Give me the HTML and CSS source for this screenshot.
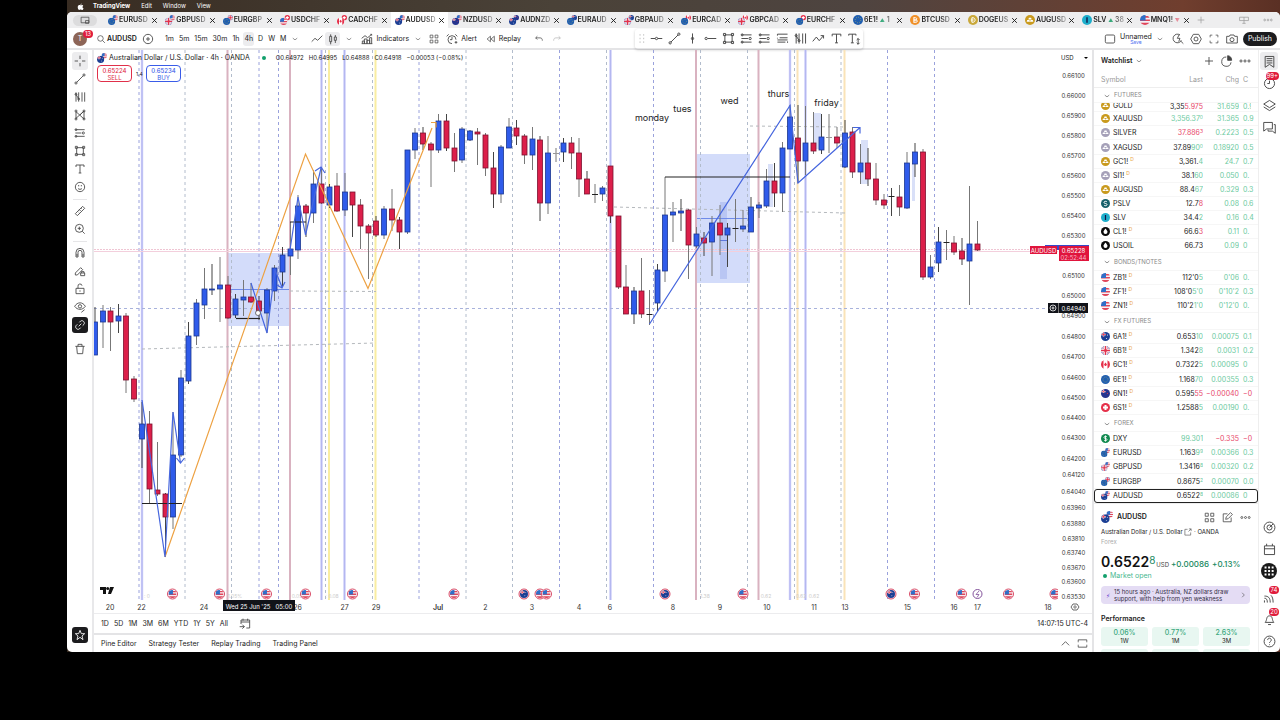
FILE: index.html
```html
<!DOCTYPE html>
<html lang="en">
<head>
<meta charset="utf-8">
<title>AUDUSD – TradingView</title>
<link rel="stylesheet" href="styles.css">
</head>
<body>
<svg class="sprite" aria-hidden="true">
  <defs>
    <clipPath id="disc"><circle cx="9" cy="9" r="9"/></clipPath>
    <symbol id="f-us" viewBox="0 0 18 18"><g clip-path="url(#disc)"><path fill="#f4f0f6" d="M0 0h18v18H0z"/><path fill="#e0465a" d="M0 2h18v3H0zM0 8h18v3H0zM0 14h18v4H0z"/><path fill="#2f6fc8" d="M0 0h10v10H0z"/></g></symbol>
    <symbol id="f-au" viewBox="0 0 18 18"><g clip-path="url(#disc)"><path fill="#1c3f94" d="M0 0h18v18H0z"/><path stroke="#fff" stroke-width="3" d="M5 0v9M0 5h10"/><path stroke="#e0304a" stroke-width="1.5" d="M5 0v9M0 5h10"/><circle cx="13" cy="6" r="1" fill="#fff"/><circle cx="11" cy="13" r="1" fill="#fff"/></g></symbol>
    <symbol id="f-nz" viewBox="0 0 18 18"><g clip-path="url(#disc)"><path fill="#25348f" d="M0 0h18v18H0z"/><path stroke="#fff" stroke-width="2.5" d="M5 0v8M0 5h9"/><path stroke="#e0304a" d="M5 0v8M0 5h9"/><circle cx="13" cy="9" r="1.2" fill="#e0304a"/></g></symbol>
    <symbol id="f-eu" viewBox="0 0 18 18"><circle cx="9" cy="9" r="9" fill="#1f5eb0"/><circle cx="9" cy="9" r="5" fill="none" stroke="#b8b46a" stroke-width="1.4" stroke-dasharray="1.4 2.5"/></symbol>
    <symbol id="f-gb" viewBox="0 0 18 18"><g clip-path="url(#disc)"><path fill="#5a6fb8" d="M0 0h18v18H0z"/><path stroke="#fff" stroke-width="3" d="M0 0l18 18M18 0L0 18"/><path stroke="#fff" stroke-width="6" d="M9 0v18M0 9h18"/><path stroke="#e0344e" stroke-width="3" d="M9 0v18M0 9h18"/><path stroke="#e0344e" d="M0 0l18 18M18 0L0 18"/></g></symbol>
    <symbol id="f-ch" viewBox="0 0 18 18"><circle cx="9" cy="9" r="9" fill="#e5304a"/><path fill="#fff" d="M7 4h4v3h3v4h-3v3H7v-3H4V7h3z"/></symbol>
    <symbol id="f-ca" viewBox="0 0 18 18"><g clip-path="url(#disc)"><path fill="#fff" d="M0 0h18v18H0z"/><path fill="#e5304a" d="M0 0h5v18H0zM13 0h5v18h-5zM9 5l3 4-2 3H8L6 9z"/></g></symbol>
    <symbol id="f-gold" viewBox="0 0 18 18"><circle cx="9" cy="9" r="9" fill="#c99a1e"/><path fill="#fff" d="M7 5h4l1 3H6zM4 9h4l1 3H3zM10 9h4l1 3H9z"/></symbol>
    <symbol id="f-silver" viewBox="0 0 18 18"><circle cx="9" cy="9" r="9" fill="#a5a0b8"/><path fill="#fff" d="M7 5h4l1 3H6zM4 9h4l1 3H3zM10 9h4l1 3H9z"/></symbol>
    <symbol id="f-pslv" viewBox="0 0 18 18"><circle cx="9" cy="9" r="9" fill="#17606b"/><path fill="none" stroke="#fff" stroke-width="2" d="M12 6c-1-2-6-2-6 1s6 1 6 4-5 3-6 1"/></symbol>
    <symbol id="f-slv" viewBox="0 0 18 18"><circle cx="9" cy="9" r="9" fill="#1eaecb"/><path stroke="#114" stroke-width="2.4" d="M9 4v10"/></symbol>
    <symbol id="f-oil" viewBox="0 0 18 18"><circle cx="9" cy="9" r="9" fill="#0b0b0b"/><path fill="#fff" d="M9 3c3 4 4 5 4 7a4 4 0 0 1-8 0c0-2 1-3 4-7z"/></symbol>
    <symbol id="f-dxy" viewBox="0 0 18 18"><circle cx="9" cy="9" r="9" fill="#128a50"/><path fill="none" stroke="#fff" stroke-width="1.8" d="M12 6c-1-2-6-2-6 1s6 1 6 4-5 3-6 1M9 3v12"/></symbol>
    <symbol id="f-btc" viewBox="0 0 18 18"><circle cx="9" cy="9" r="9" fill="#f09028"/><path fill="none" stroke="#fff" stroke-width="1.8" d="M7 4v10M7 5h3c3 0 3 4 0 4H7h4c3 0 3 4 0 4H7"/></symbol>
    <symbol id="f-doge" viewBox="0 0 18 18"><circle cx="9" cy="9" r="9" fill="#c9a83a"/><path fill="none" stroke="#fff" stroke-width="1.8" d="M7 5v8h2c5 0 5-8 0-8zM5 9h5"/></symbol>

    <symbol id="i-search" viewBox="0 0 18 18"><circle cx="8" cy="8" r="5"/><path d="M12 12l4 4"/></symbol>
    <symbol id="i-plusc" viewBox="0 0 18 18"><circle cx="9" cy="9" r="7"/><path d="M9 6v6M6 9h6"/></symbol>
    <symbol id="i-plus" viewBox="0 0 18 18"><path d="M9 3v12M3 9h12"/></symbol>
    <symbol id="i-close" viewBox="0 0 18 18"><path d="M3 3l12 12M15 3L3 15"/></symbol>
    <symbol id="i-chev" viewBox="0 0 18 18"><path d="M4 7l5 4 5-4"/></symbol>
    <symbol id="i-chevup" viewBox="0 0 18 18"><path d="M3 12l6-6 6 6"/></symbol>
    <symbol id="i-chevr" viewBox="0 0 18 18"><path d="M7 4l5 5-5 5"/></symbol>
    <symbol id="i-line" viewBox="0 0 18 18"><path d="M1 13l5-5 4 3 7-7"/></symbol>
    <symbol id="i-candle" viewBox="0 0 18 18"><path d="M4 5h3v8H4zM5.500 2v3M5.500 13v4M11 6h3v5h-3zM12.500 3v3M12.500 11v4"/></symbol>
    <symbol id="i-ind" viewBox="0 0 18 18"><path d="M1 8l5-4 4 3 6-5M14 2h2v2M2 16v-4h3v4M5 16V9h4v7M9 16v-5h4v5M13 16V7h3v9M1 16h16"/></symbol>
    <symbol id="i-grid" viewBox="0 0 18 18"><path d="M2 2h5v5H2zM11 2h5v5h-5zM2 11h5v5H2zM11 11h5v5h-5z"/></symbol>
    <symbol id="i-alert" viewBox="0 0 18 18"><path d="M9 16a6 6 0 1 1 6-6M9 6v4H6M1 5l3-3M14 2l3 3M13 14h4M15 12v4"/></symbol>
    <symbol id="i-replay" viewBox="0 0 18 18"><path d="M8 4L2 9l6 5zM15 4L9 9l6 5z"/></symbol>
    <symbol id="i-undo" viewBox="0 0 18 18"><path d="M6 4L3 7l3 3M3 7h8c3 0 4 2 4 5"/></symbol>
    <symbol id="i-redo" viewBox="0 0 18 18"><path d="M12 4l3 3-3 3M15 7H7c-3 0-4 2-4 5"/></symbol>
    <symbol id="i-drag" viewBox="0 0 18 18"><path stroke-dasharray="2 3" d="M7 3v13M12 3v13"/></symbol>
    <symbol id="i-hline" viewBox="0 0 18 18"><path d="M1 9h6M11 9h6"/><circle cx="9" cy="9" r="1.600"/></symbol>
    <symbol id="i-trend" viewBox="0 0 18 18"><path d="M4 14L14 4"/><circle cx="3" cy="15" r="1.6"/><circle cx="15" cy="3" r="1.6"/></symbol>
    <symbol id="i-vline" viewBox="0 0 18 18"><path d="M9 2v14"/><circle cx="9" cy="9" r="1.6"/></symbol>
    <symbol id="i-hray" viewBox="0 0 18 18"><circle cx="3" cy="9" r="1.6"/><path d="M5 9h12"/></symbol>
    <symbol id="i-rect" viewBox="0 0 18 18"><path d="M4 4h10v10H4z"/><path d="M2 2h3v3H2zM13 2h3v3h-3zM2 13h3v3H2zM13 13h3v3h-3z"/></symbol>
    <symbol id="i-fib" viewBox="0 0 18 18"><path d="M2 3h14M5 8h11M2 8v1M2 14h11M16 13v2M2 3v2M2 11h14"/></symbol>
    <symbol id="i-long" viewBox="0 0 18 18"><path d="M2 4h14M2 9h9M2 14h14"/><circle cx="3" cy="4" r="1.4"/><circle cx="14" cy="9" r="1.6"/><circle cx="3" cy="14" r="1.4"/></symbol>
    <symbol id="i-pitch" viewBox="0 0 18 18"><path d="M3 2v14M7 2v14M12 2v14M16 2v14M3 5l4 7"/><circle cx="3" cy="5" r="1.4"/><circle cx="7" cy="12" r="1.4"/></symbol>
    <symbol id="i-pattern" viewBox="0 0 18 18"><path d="M3 15V4l12 11V3L3 14M9 9l6-6"/><circle cx="3" cy="15" r="1.5"/><circle cx="3" cy="3" r="1.5"/><circle cx="15" cy="15" r="1.5"/><circle cx="15" cy="3" r="1.5"/></symbol>
    <symbol id="i-path" viewBox="0 0 18 18"><path d="M1 13l5-6 4 5 6-7M12 5h4v4"/></symbol>
    <symbol id="i-text" viewBox="0 0 18 18"><path d="M3 6V3h12v3M9 3v12M7 15h4"/></symbol>
    <symbol id="i-anchor" viewBox="0 0 18 18"><path d="M1 5V3h10v2M6 3v12M4 15h4M14 9v8M12 15l2 2 2-2M12 11l2-2 2 2"/></symbol>
    <symbol id="i-cross" viewBox="0 0 18 18"><path d="M9 1v5M9 12v5M1 9h5M12 9h5"/></symbol>
    <symbol id="i-smile" viewBox="0 0 18 18"><circle cx="9" cy="9" r="7"/><path d="M7 6v2M11 6v2M6 11c1 2 5 2 6 0"/></symbol>
    <symbol id="i-ruler" viewBox="0 0 18 18"><path d="M2 13L13 2l3 3L5 16zM6 10l1 1M8 7l2 2M11 5l1 1"/></symbol>
    <symbol id="i-zoomin" viewBox="0 0 18 18"><circle cx="8" cy="8" r="6"/><path d="M12.500 12.500L16 16M8 5.500v5M5.500 8h5"/></symbol>
    <symbol id="i-magnet" viewBox="0 0 18 18"><path d="M3 15V8a6 6 0 0 1 12 0v7h-3V8a3 3 0 0 0-6 0v7zM3 12h3M12 12h3"/></symbol>
    <symbol id="i-draw" viewBox="0 0 18 18"><path d="M2 12l8-8 3 3-8 8H2zM10 12h6v4h-6zM11 12v-2h4v2"/></symbol>
    <symbol id="i-lock" viewBox="0 0 18 18"><path d="M3 8h12v8H3zM6 8V5a3 3 0 0 1 6-1M9 11v2"/></symbol>
    <symbol id="i-eye" viewBox="0 0 18 18"><path d="M1 8c4-7 12-7 16 0-4 6-12 6-16 0zM11 17l5-4"/><circle cx="9" cy="8" r="2.500"/></symbol>
    <symbol id="i-link" viewBox="0 0 18 18"><path d="M7 11l4-4M8 5l2-2c3-2 7 2 5 5l-2 2M10 13l-2 2c-3 2-7-2-5-5l2-2"/></symbol>
    <symbol id="i-trash" viewBox="0 0 18 18"><path d="M2 5h14M6 5V2h6v3M4 5l1 11h8l1-11"/></symbol>
    <symbol id="i-star" viewBox="0 0 18 18"><path d="M9 2l2 5h5l-4 3.500L13.500 16 9 12.500 4.500 16 6 10.500 2 7h5z"/></symbol>
    <symbol id="i-square" viewBox="0 0 18 18"><rect x="2" y="3" width="14" height="12" rx="2"/></symbol>
    <symbol id="i-quick" viewBox="0 0 18 18"><path d="M12 3a6.500 6.500 0 1 0 2 8M11 2L8 8h4l-2 5M13 12l4 4"/></symbol>
    <symbol id="i-hex" viewBox="0 0 18 18"><path d="M5 2h8l4 7-4 7H5L1 9z"/><circle cx="9" cy="9" r="3"/></symbol>
    <symbol id="i-full" viewBox="0 0 18 18"><path d="M2 6V2h4M12 2h4v4M16 12v4h-4M6 16H2v-4"/></symbol>
    <symbol id="i-cam" viewBox="0 0 18 18"><path d="M1 5h4l1-2h6l1 2h4v10H1z"/><circle cx="9" cy="10" r="3"/></symbol>
    <symbol id="i-pie" viewBox="0 0 18 18"><path d="M15 11a7 7 0 1 1-7-8"/><path fill="currentColor" d="M10 1a7 7 0 0 1 6 7h-6z"/></symbol>
    <symbol id="i-more" viewBox="0 0 18 18"><circle cx="3" cy="9" r="1.600"/><circle cx="9" cy="9" r="1.600"/><circle cx="15" cy="9" r="1.600"/></symbol>
    <symbol id="i-list" viewBox="0 0 18 18"><path d="M3 2h12v15l-6-4-6 4zM5 5h8M5 8h8M5 11h8"/></symbol>
    <symbol id="i-clock" viewBox="0 0 18 18"><circle cx="9" cy="9" r="7"/><path d="M9 5v4H6"/></symbol>
    <symbol id="i-layers" viewBox="0 0 18 18"><path d="M9 2l8 5-8 5-8-5zM1 11l8 5 8-5"/></symbol>
    <symbol id="i-chat" viewBox="0 0 18 18"><path d="M1 2h12v9H5l-4 3zM15 5h2v12l-4-3H7v-2"/></symbol>
    <symbol id="i-target" viewBox="0 0 18 18"><circle cx="9" cy="9" r="7.500"/><circle cx="9" cy="9" r="3.500"/><path d="M9 9l5-5"/></symbol>
    <symbol id="i-cal" viewBox="0 0 18 18"><path d="M2 4h14v12H2zM2 8h14M5 1v3M13 1v3"/></symbol>
    <symbol id="i-goto" viewBox="0 0 18 18"><path d="M3 9V3h13v12h-5M3 6h13M6 1v3M13 1v3M1 13h7M5 10l3 3-3 3"/></symbol>
    <symbol id="i-apps" viewBox="0 0 18 18"><circle cx="9" cy="9" r="9" fill="#1a1a1a" stroke="none"/><path stroke="#fff" stroke-width="2.200" stroke-dasharray="2.200 1.800" d="M4 5h11M4 9h11M4 13h11"/></symbol>
    <symbol id="i-feed" viewBox="0 0 18 18"><path d="M2 16v-3M6 16c0-4-1-6-4-6M10 16c0-7-3-9-8-9M14 16c0-5-1-8-3-10"/></symbol>
    <symbol id="i-bell" viewBox="0 0 18 18"><path d="M3 13c3-3 1-9 6-9s3 6 6 9zM7 16h4"/></symbol>
    <symbol id="i-help" viewBox="0 0 18 18"><circle cx="9" cy="9" r="7.500"/><path d="M6.500 7c0-4 5-3 5 0 0 2-2.500 2-2.500 4M9 13v1"/></symbol>
    <symbol id="i-edit" viewBox="0 0 18 18"><path d="M9 3H2v13h13V9M6 12l1-4 7-7 3 3-7 7z"/></symbol>
    <symbol id="i-ext" viewBox="0 0 18 18"><path d="M8 3H2v13h13v-6M11 2h5v5M16 2l-6 6"/></symbol>
    <symbol id="i-screen" viewBox="0 0 18 18"><path d="M2 4h14v10H2z"/><path d="M10 10h6v5h-6z"/></symbol>
    <symbol id="i-split" viewBox="0 0 18 18"><path d="M1 4h16v6H1zM9 4v11M6 15h6"/></symbol>
    <symbol id="i-max" viewBox="0 0 18 18"><path d="M2 6V3h14v3M2 12v3h14v-3M2 6v1M16 6v1M2 11v1M16 11v1"/></symbol>
  </defs>
</svg>

<div class="app">
  <nav class="menubar">
    <svg class="apple" viewBox="0 0 18 18"><path fill="#fff" d="M12 1c0 2-1 3-3 4 0-2 1-4 3-4zM9 6c1 0 2-1 4-1 1 0 3 1 3 2-3 2-2 6 1 7-1 2-2 4-4 4-1 0-2-1-4-1s-2 1-3 1C4 18 1 14 2 9c1-4 4-5 7-3z"/></svg>
    <b>TradingView</b><span>Edit</span><span>Window</span><span>View</span>
  </nav>

  <div class="window">
    <div class="tabbar">
      <button class="pill" aria-label="Screens"><svg class="ic s"><use href="#i-screen"/></svg></button>
      <div class="tabs" id="tabs"></div>
      <div class="tab-end">
        <svg class="ic s"><use href="#i-plus"/></svg>
        <svg class="ic s push"><use href="#i-split"/></svg>
        <svg class="ic s"><use href="#i-more"/></svg>
      </div>
    </div>

    <header class="toolbar">
      <div class="avatar">T<span class="badge">13</span></div>
      <button class="symbol-search"><svg class="ic s"><use href="#i-search"/></svg><b>AUDUSD</b></button>
      <button class="tb compare" aria-label="Compare"><svg class="ic"><use href="#i-plusc"/></svg></button>
      <div class="intervals">
        <button>1m</button><button>5m</button><button>15m</button><button>30m</button><button>1h</button><button class="on">4h</button><button>D</button><button>W</button><button>M</button>
      </div>
      <button class="tb wide" aria-label="More intervals"><svg class="ic xs"><use href="#i-chev"/></svg></button>
      <button class="tb" aria-label="Line"><svg class="ic"><use href="#i-line"/></svg></button>
      <button class="tb on" aria-label="Candles"><svg class="ic"><use href="#i-candle"/></svg></button>
      <button class="tb" aria-label="Chart types"><svg class="ic xs"><use href="#i-chev"/></svg></button>
      <button class="tb label"><svg class="ic"><use href="#i-ind"/></svg>Indicators</button>
      <button class="tb" aria-label="Favourites"><svg class="ic xs"><use href="#i-chev"/></svg></button>
      <button class="tb" aria-label="Templates"><svg class="ic s"><use href="#i-grid"/></svg></button>
      <button class="tb label"><svg class="ic"><use href="#i-alert"/></svg>Alert</button>
      <button class="tb label spaced"><svg class="ic s"><use href="#i-replay"/></svg>Replay</button>
      <button class="tb spaced" aria-label="Undo"><svg class="ic s"><use href="#i-undo"/></svg></button>
      <button class="tb dim" aria-label="Redo"><svg class="ic s"><use href="#i-redo"/></svg></button>
      <div class="favs" id="favs"></div>
      <div class="tb-right">
        <button class="tb" aria-label="Layout"><svg class="ic"><use href="#i-square"/></svg></button>
        <button class="layout-name"><span>Unnamed</span><em>Save</em></button>
        <button class="tb" aria-label="Layouts"><svg class="ic xs"><use href="#i-chev"/></svg></button>
        <button class="tb" aria-label="Quick search"><svg class="ic"><use href="#i-quick"/></svg></button>
        <button class="tb" aria-label="Settings"><svg class="ic"><use href="#i-hex"/></svg></button>
        <button class="tb" aria-label="Fullscreen"><svg class="ic s"><use href="#i-full"/></svg></button>
        <button class="tb" aria-label="Snapshot"><svg class="ic"><use href="#i-cam"/></svg></button>
        <button class="publish">Publish</button>
      </div>
    </header>

    <main class="main">
      <aside class="tools" id="tools"></aside>

      <section class="chart-col">
        <div class="chart-wrap">
          <svg class="chart" id="chart" viewBox="94 50 998 563" preserveAspectRatio="xMinYMin meet"></svg>
          <div class="legend">
            <svg class="pair" viewBox="0 0 22 22"><use href="#f-us" x="10" y="0" width="12" height="12"/><use href="#f-au" x="0" y="6" width="16" height="16"/></svg>
            <span class="name">Australian Dollar / U.S. Dollar · 4h · OANDA</span>
            <i class="dot"></i>
            <span class="ohlc"><span>O0.64972</span><span>H0.64995</span><span>L0.64888</span><span>C0.64918</span><span>−0.00053 (−0.08%)</span></span>
          </div>
          <div class="quotes">
            <button class="sell"><b>0.65224</b>SELL</button>
            <small>1.4</small>
            <button class="buy"><b>0.65234</b>BUY</button>
          </div>
          <select class="currency" aria-label="Currency"><option>USD</option></select>
          <svg class="caret" viewBox="0 0 6 4"><path d="M1 1h4L3 3z"/></svg>
        </div>
        <div class="ranges">
          <button>1D</button><button>5D</button><button>1M</button><button>3M</button><button>6M</button><button>YTD</button><button>1Y</button><button>5Y</button><button>All</button>
          <svg class="ic"><use href="#i-goto"/></svg>
          <span class="time">14:07:15 UTC-4</span>
        </div>
        <div class="panels">
          <button>Pine Editor</button><button>Strategy Tester</button><button>Replay Trading</button><button>Trading Panel</button>
          <span class="panel-icons"><svg class="ic"><use href="#i-chevup"/></svg><svg class="ic"><use href="#i-max"/></svg></span>
        </div>
      </section>

      <section class="watch">
        <div class="watch-head">
          <b>Watchlist</b><svg class="ic xs"><use href="#i-chev"/></svg>
          <svg class="ic push"><use href="#i-plus"/></svg><svg class="ic"><use href="#i-pie"/></svg><svg class="ic"><use href="#i-more"/></svg>
        </div>
        <table class="list">
          <thead><tr><th class="sym">Symbol</th><th class="last">Last</th><th class="chg">Chg</th><th class="pct">C</th></tr></thead>
          <tbody id="rows"></tbody>
        </table>
        <div class="detail">
          <div class="d-head">
            <svg class="pair" viewBox="0 0 22 22"><use href="#f-us" x="10" y="0" width="12" height="12"/><use href="#f-au" x="0" y="6" width="16" height="16"/></svg>
            <b>AUDUSD</b>
            <svg class="ic push"><use href="#i-grid"/></svg><svg class="ic"><use href="#i-edit"/></svg><svg class="ic"><use href="#i-more"/></svg>
          </div>
          <div class="d-name">Australian Dollar / U.S. Dollar <svg class="ic xs"><use href="#i-ext"/></svg> · OANDA</div>
          <div class="d-kind">Forex</div>
          <div class="d-price"><strong>0.6522<sup>8</sup></strong><small>USD</small><span>+0.00086</span><span>+0.13%</span></div>
          <div class="d-open"><i class="dot"></i>Market open</div>
          <a class="news" href="#"><span class="bolt">⚡︎</span><span class="news-text">15 hours ago · Australia, NZ dollars draw support, with help from yen weakness</span><svg class="ic xs"><use href="#i-chevr"/></svg></a>
          <h2>Performance</h2>
          <div class="perf">
            <div><b>0.06%</b>1W</div><div><b>0.77%</b>1M</div><div><b>2.63%</b>3M</div>
            <div></div><div></div><div></div>
          </div>
        </div>
      </section>

      <aside class="rail">
        <button class="on" aria-label="Watchlist"><svg class="ic l"><use href="#i-list"/></svg></button>
        <button aria-label="Alerts"><svg class="ic l"><use href="#i-clock"/></svg><span class="badge">99+</span></button>
        <button aria-label="Objects"><svg class="ic l"><use href="#i-layers"/></svg></button>
        <button aria-label="Chats"><svg class="ic l"><use href="#i-chat"/></svg></button>
        <button class="push-down" aria-label="Screeners"><svg class="ic l"><use href="#i-target"/></svg></button>
        <button aria-label="Calendar"><svg class="ic l"><use href="#i-cal"/></svg></button>
        <button class="products" aria-label="Products"><svg class="ic xl"><use href="#i-apps"/></svg></button>
        <button aria-label="Feed"><svg class="ic l"><use href="#i-feed"/></svg><span class="badge">74</span></button>
        <button aria-label="Notifications"><svg class="ic l"><use href="#i-bell"/></svg><span class="badge">20</span></button>
        <button aria-label="Help"><svg class="ic l"><use href="#i-help"/></svg></button>
      </aside>
    </main>
  </div>
</div>
<script src="app.js"></script>
</body>
</html>
```

FILE: styles.css
```css
* { box-sizing: border-box; }
body {
  margin: 0;
  background: #000;
  color: #222;
  font-family: Inter, "Liberation Sans", sans-serif;
  font-size: 7px;
  line-height: 10px;
}
button, select {
  font: inherit;
  color: inherit;
  background: none;
  border: 0;
  padding: 0;
  margin: 0;
}
.sprite { position: absolute; width: 0; height: 0; }
.ic {
  width: 12px;
  height: 12px;
  flex: none;
  fill: none;
  stroke: currentColor;
  stroke-width: 1.3;
  color: #444;
}
.ic.xs { width: 8px; height: 8px; }
.ic.s { width: 10px; height: 10px; }
.ic.l { width: 13px; height: 13px; }
.ic.xl { width: 16px; height: 16px; }
.push { margin-left: auto; }
.dot { width: 4px; height: 4px; border-radius: 50%; background: #12a06c; flex: none; }
.pair { width: 10px; height: 10px; flex: none; }
.badge {
  position: absolute;
  top: -1px;
  right: -1px;
  min-width: 10px;
  padding: 0 1px;
  border-radius: 4px;
  background: #e01c3c;
  color: #fff;
  font-size: 6px;
  line-height: 8px;
  text-align: center;
}

.app {
  margin-left: 67px;
  height: calc(100vh - 68px);
  display: flex;
  flex-direction: column;
  background: linear-gradient(90deg, #382c22, #4a4238 40%, #4e4440 65%, #703e2e 92%, #5a3024);
}
.menubar {
  height: 12px;
  flex: none;
  display: flex;
  align-items: center;
  gap: 10px;
  padding-left: 10px;
  color: #fff;
  font-size: 6px;
}
.menubar b { margin-left: -1px; }
.menubar span { margin-left: 1px; }
.apple { width: 7px; height: 7px; }
.window {
  flex: 1;
  min-height: 0;
  display: flex;
  flex-direction: column;
  background: #fff;
  border-radius: 5px;
  overflow: hidden;
}

.tabbar {
  height: 16px;
  flex: none;
  display: flex;
  align-items: center;
  background: #eeeeef;
}
.pill {
  width: 24px;
  height: 11px;
  margin: 0 7px 0 6px;
  border-radius: 6px;
  background: #dcdcdd;
  display: flex;
  align-items: center;
  justify-content: center;
}
.tabs { flex: 1; display: flex; height: 100%; min-width: 0; }
.tab {
  flex: 1 1 0;
  min-width: 0;
  display: flex;
  align-items: center;
  gap: 1px;
  padding: 0 3px 0 4px;
  font-weight: 600;
}
.tab.on { background: #fff; }
.tab span {
  flex: 1;
  min-width: 0;
  overflow: hidden;
  white-space: nowrap;
  -webkit-mask-image: linear-gradient(90deg, #000 55%, #0004 100%);
  mask-image: linear-gradient(90deg, #000 55%, #0004 100%);
}
.tab .ic { width: 7px; height: 7px; stroke-width: 2.5; color: #222; }
.tab i { font-size: 5px; font-style: normal; }
.tab .up { color: #35a879; }
.tab .down { color: #e0304a; }
.tab-end { width: 87px; display: flex; align-items: center; gap: 14px; padding: 0 7px 0 3px; }
.tab-end .ic { color: #999; }

.toolbar {
  height: 22px;
  flex: none;
  display: flex;
  align-items: center;
  padding-top: 1px;
  border-bottom: 2px solid #e4e4e6;
}
.avatar {
  position: relative;
  width: 14px;
  height: 14px;
  margin: 0 9px 0 6px;
  border-radius: 50%;
  background: #8d6557;
  color: #fff;
  line-height: 14px;
  text-align: center;
}
.avatar .badge { top: -2px; right: -6px; }
.symbol-search { display: flex; align-items: center; gap: 1px; }
.symbol-search b { font-weight: 600; }
.compare { margin: 0 9px 0 4px; }
.intervals { display: flex; gap: 3px; margin-left: 5px; }
.intervals button { padding: 0 1px; line-height: 14px; border-radius: 3px; }
.on { background: #ececee; }
.tb.on { border-radius: 3px; }
.tb { height: 14px; min-width: 15px; display: flex; align-items: center; justify-content: center; margin-right: 1px; }
.tb.compare { margin-right: 3px; }
.tb.wide { margin-right: 7px; }
.tb.label { gap: 3px; margin: 0 1px 0 4px; }
.tb.label.spaced { margin-left: 8px; }
.tb.spaced { margin-left: 7px; margin-right: 3px; }
.tb.dim { opacity: .4; }
.favs {
  margin-left: 70px;
  display: flex;
  align-items: center;
  height: 20px;
  border-radius: 3px;
  box-shadow: 0 1px 3px #0003;
}
.favs button { width: 18px; height: 14px; display: grid; place-items: center; }
.favs .ic { width: 13px; height: 13px; }
.favs button:first-child { width: 12px; opacity: .35; }
.tb-right { margin-left: auto; display: flex; align-items: center; padding-right: 3px; }
.tb-right .tb { width: 17px; }
.layout-name { display: flex; flex-direction: column; align-items: center; line-height: 7px; }
.layout-name em { font-style: normal; font-size: 5px; line-height: 5px; color: #4a6cf0; }
.publish {
  height: 14px;
  margin-left: 1px;
  padding: 0 5px;
  border-radius: 7px;
  background: #1c1c1e;
  color: #fff;
}

.main { flex: 1; min-height: 0; display: flex; }
.tools {
  width: 27px;
  flex: none;
  display: flex;
  flex-direction: column;
  align-items: center;
  padding: 2px 0 8px;
  border-right: 2px solid #e8e8ea;
}
.tools button { width: 16px; height: 18px; flex: none; display: grid; place-items: center; border-radius: 3px; }
.tools hr { width: 14px; height: 6px; margin: 0; border: 0; flex: none; background: linear-gradient(#e6e6e8, #e6e6e8) center / 100% 1px no-repeat; }
.tools .dark { height: 16px; margin: 1px 0; background: #1c1c1e; }
.tools .dark .ic { color: #fff; }
.tools .gap { margin-top: 6px; }
.tools .end { margin-top: auto; }

.chart-col { flex: 1; min-width: 0; display: flex; flex-direction: column; }
.chart-wrap { position: relative; flex: 1; min-height: 0; }
.chart { width: 100%; height: 100%; display: block; }
.legend {
  position: absolute;
  top: 3px;
  left: 3px;
  display: flex;
  align-items: center;
  white-space: nowrap;
}
.legend .name { margin: 0 12px 0 2px; }
.ohlc { display: flex; gap: 5px; margin-left: 10px; font-size: 6px; }
.quotes { position: absolute; top: 15px; left: 3px; display: flex; align-items: center; gap: 4px; }
.quotes button {
  width: 35px;
  height: 17px;
  border: 1px solid;
  border-radius: 4px;
  background: #fff;
  font-size: 6px;
  line-height: 7px;
}
.quotes b { display: block; font-weight: 500; }
.quotes small { font-size: 5px; width: 6px; }
.sell { color: #e0304a; }
.buy { color: #3a5ce8; }
.currency {
  position: absolute;
  top: 2px;
  right: 1px;
  width: 32px;
  height: 11px;
  padding-left: 2px;
  appearance: none;
  font-size: 6px;
}
.caret { position: absolute; top: 6px; right: 3px; width: 6px; height: 4px; pointer-events: none; }
.ranges, .panels {
  flex: none;
  display: flex;
  align-items: center;
  padding: 0 4px 0 7px;
  border-top: 1px solid #ececee;
}
.ranges { height: 20px; gap: 5px; }
.ranges .ic { margin-left: 6px; }
.time { margin-left: auto; }
.panels { height: 19px; gap: 12px; border-top: 2px solid #e4e4e6; }
.panel-icons { margin-left: auto; display: flex; gap: 6px; }
.panel-icons .ic { width: 11px; height: 11px; }

.watch { width: 166px; flex: none; border-left: 2px solid #e4e4e6; overflow: hidden; }
.watch-head { height: 22px; display: flex; align-items: center; padding: 0 7px; gap: 6px; }
.watch-head b { font-weight: 600; margin-right: -4px; }
.list {
  width: 100%;
  height: 431px;
  table-layout: fixed;
  border-collapse: separate;
  border-spacing: 0;
  line-height: 9px;
}
.list th, .list td { padding: 0; font-weight: 400; text-align: right; white-space: nowrap; overflow: hidden; }
.list th { height: 16px; color: #999; border-bottom: 1px solid #eee; }
.list .sym { width: 58px; padding-left: 7px; text-align: left; }
.list .last { width: 51px; }
.list .chg { width: 36px; }
.list .pct { width: 19px; padding: 0 7px 0 4px; text-align: left; }
.list td { height: 14px; border-bottom: 1px solid #f6f6f6; }
.list .group td { height: 17px; padding-left: 9px; text-align: left; color: #888; font-size: 6px; }
.list .first td { height: 15px; }
.group .ic { vertical-align: middle; margin-right: 3px; }
.list .cut td { height: 9px; }
.cell { display: flex; align-items: center; gap: 3px; height: 12px; }
.cell .coin { width: 9px; height: 9px; flex: none; }
.cell sup { font-size: 5px; line-height: 5px; color: #e8a03a; margin: -4px 0 0 -1px; }
.cut .clip { height: 8px; display: flex; flex-direction: column; justify-content: flex-end; overflow: hidden; }
.cut .cell { flex: none; }
.up { color: #6ccaa0; }
.down { color: #e8476a; }
.list .sel { outline: 1px solid #222; outline-offset: -1px; border-radius: 3px; }
.list sup.tick { font-size: 5px; line-height: 5px; vertical-align: 2px; }

.detail { padding: 6px 8px 0 7px; border-top: 1px solid #eee; }
.d-head { display: flex; align-items: center; gap: 6px; height: 14px; margin-right: -1px; }
.d-head .pair { width: 12px; height: 12px; }
.d-head b { margin-left: -2px; font-weight: 600; }
.d-head .ic { width: 11px; height: 11px; }
.d-head .ic + .ic { margin-left: 1px; }
.d-name { font-size: 6px; margin-top: 3px; white-space: nowrap; }
.d-name .ic { vertical-align: middle; }
.d-kind { font-size: 6px; color: #aaa; }
.d-price { display: flex; align-items: baseline; height: 20px; line-height: 22px; margin-top: 4px; color: #168860; white-space: nowrap; font-weight: 500; }
.d-price strong { font-size: 14px; font-weight: 600; color: #111; }
.d-price sup { font-size: 10px; line-height: 10px; color: #168860; font-weight: 400; vertical-align: 3px; }
.d-price small { font-size: 6px; margin: 0 2px 0 1px; color: #444; font-weight: 400; }
.d-price span { font-size: 8px; margin-right: 3px; }
.d-open { display: flex; align-items: center; gap: 3px; padding-left: 2px; color: #4ab890; }
.news {
  display: flex;
  align-items: center;
  gap: 3px;
  margin-top: 5px;
  padding: 2px 3px;
  border-radius: 4px;
  background: #e4dcf4;
  color: #332d44;
  text-decoration: none;
  font-size: 6px;
  line-height: 7px;
}
.news-text { flex: 1; }
.bolt { width: 7px; color: #6a3fd0; text-align: center; }
.detail h2 { margin: 10px 0 3px; font-size: 7px; line-height: 10px; font-weight: 600; }
.perf { display: grid; grid-template-columns: repeat(3, 1fr); gap: 3px 4px; }
.perf div { height: 19px; padding-top: 2px; border-radius: 3px; background: #e8f7f1; text-align: center; font-size: 6px; line-height: 8px; }
.perf b { display: block; font-size: 7px; font-weight: 500; color: #3aa77e; }

.rail { width: 22px; flex: none; display: flex; flex-direction: column; gap: 4px; padding: 2px 1px; border-left: 1px solid #eee; }
.rail button { position: relative; width: 18px; height: 18px; flex: none; display: grid; place-items: center; border-radius: 3px; }
.rail .badge { top: -2px; right: -1px; }
.rail .push-down { margin-top: auto; }
.rail .products { margin-bottom: 4px; }
```

FILE: app.js
```js
const $ = id => document.getElementById(id);
const icon = (n, c = '') => `<svg class="ic ${c}"><use href="#i-${n}"/></svg>`;
const coin = code => {
  const [a, b] = code.split('-');
  return b
    ? `<svg class="coin pair" viewBox="0 0 22 22"><use href="#f-${b}" x="10" width="12" height="12"/><use href="#f-${a}" y="6" width="16" height="16"/></svg>`
    : `<svg class="coin pair" viewBox="0 0 18 18"><use href="#f-${a}"/></svg>`;
};

/* Browser tabs */
const tabs = [
  ['EURUSD', 'eu-us'], ['GBPUSD', 'gb-us'], ['EURGBP', 'eu-gb'], ['USDCHF', 'us-ch'], ['CADCHF', 'ca-ch'],
  ['AUDUSD', 'au-us'], ['NZDUSD', 'nz-us'], ['AUDNZD', 'au-nz'], ['EURAUD', 'eu-au'], ['GBPAUD', 'gb-au'],
  ['EURCAD', 'eu-ca'], ['GBPCAD', 'gb-ca'], ['EURCHF', 'eu-ch'], ['6E1! <i class="up">▲</i> 1', 'eu'],
  ['BTCUSD', 'btc'], ['DOGEUS', 'doge'], ['AUGUSD', 'gold'], ['SLV <i class="up">▲</i> 38', 'slv'],
  ['MNQ1! <i class="down">▼</i>', 'us']
];
$('tabs').innerHTML = tabs.map(([t, c]) =>
  `<div class="tab ${t === 'AUDUSD' ? 'on' : ''}">${coin(c)}<span>${t}</span>${icon('close')}</div>`).join('');

/* Toolbars */
$('favs').innerHTML = ['drag', 'hline', 'trend', 'vline', 'hray', 'rect', 'long', 'long', 'fib', 'pitch', 'path', 'text', 'anchor']
  .map(n => `<button aria-label="${n}">${icon(n)}</button>`).join('');
$('tools').innerHTML = [
  ['cross', 'on'], ['trend'], ['pitch'], ['pattern'], ['long'], ['rect'], ['text'], ['smile'], 0,
  ['ruler'], ['zoomin'], 0, ['magnet'], ['draw'], ['lock'], ['eye'], ['link', 'dark'], ['trash', 'gap'], ['star', 'dark end']
].map(t => t ? `<button class="${t[1] || ''}" aria-label="${t[0]}">${icon(t[0])}</button>` : '<hr>').join('');

/* Watchlist: symbol, coin, last (| starts the coloured tail), change, %, flags */
const rows = [
  '#FUTURES',
  ['GOLD', 'gold', '3,35|5.975', '31.659', '0.9', 'd'], ['XAUUSD', 'gold', '|3,356.37^0', '31.365', '0.9', 'u'],
  ['SILVER', 'silver', '|37.886^3', '0.2223', '0.5', 'd'], ['XAGUSD', 'silver', '37.89|90^0', '0.18920', '0.5', 'u'],
  ['GC1!', 'gold', '3,361.|4', '24.7', '0.7', 'u', 1], ['SI1!', 'silver', '38.1|60', '0.050', '0.', 'u', 1],
  ['AUGUSD', 'gold', '88.4|67', '0.329', '0.3', 'u'], ['PSLV', 'pslv', '12.7|8', '0.08', '0.6', 'd'],
  ['SLV', 'slv', '34.4|2', '0.16', '0.4', 'u'], ['CL1!', 'oil', '66.6|3', '0.11', '0.', 'd', 1],
  ['USOIL', 'oil', '66.73|', '0.09', '0', 'u'],
  '#BONDS/TNOTES',
  ['ZB1!', 'us', "112'0|5", "0'06", '0.', 'u', 1], ['ZF1!', 'us', "108'0|5'0", "0'10'2", '0.3', 'u', 1],
  ['ZN1!', 'us', "110'2|1'0", "0'12'0", '0.', 'u', 1],
  '#FX FUTURES',
  ['6A1!', 'au', '0.653|10', '0.00075', '0.1', 'u', 1], ['6B1!', 'gb', '1.342|8', '0.0031', '0.2', 'u', 1],
  ['6C1!', 'ca', '0.7322|5', '0.00095', '0', 'u', 1], ['6E1!', 'eu', '1.168|70', '0.00355', '0.3', 'u', 1],
  ['6N1!', 'nz', '0.595|55', '−0.00040', '−0', 'd', 1], ['6S1!', 'ch', '1.2588|5', '0.00190', '0.', 'u', 1],
  '#FOREX',
  ['DXY', 'dxy', '|99.301', '−0.335', '−0', 'u'], ['EURUSD', 'eu-us', '1.163|9^9', '0.00366', '0.3', 'u'],
  ['GBPUSD', 'gb-us', '1.3416|^8', '0.00320', '0.2', 'u'], ['EURGBP', 'eu-gb', '0.8675|^2', '0.00070', '0.0', 'u'],
  ['AUDUSD', 'au-us', '0.6522|^8', '0.00086', '0', 'u']
];
$('rows').innerHTML = rows.map((r, i) => {
  if (typeof r === 'string') return `<tr class="group ${i ? '' : 'first'}"><td colspan="4">${icon('chev', 'xs')}${r.slice(1)}</td></tr>`;
  const [sym, c, last, chg, pct, dir, late] = r;
  const [head, tail] = last.split('|');
  const [t, tick] = tail.split('^');
  const cut = sym === 'GOLD';
  const wrap = x => cut ? `<div class="clip">${x}</div>` : x;
  const cls = chg[0] === '−' ? 'down' : 'up';
  return `<tr class="${cut ? 'cut' : ''} ${sym === 'AUDUSD' ? 'sel' : ''}">
    <td class="sym">${wrap(`<div class="cell">${coin(c)}${sym}${late ? '<sup>D</sup>' : ''}</div>`)}</td>
    <td class="last">${wrap(`<div>${head}<span class="${dir === 'u' ? 'up' : 'down'}">${t}${tick ? `<sup class="tick">${tick}</sup>` : ''}</span></div>`)}</td>
    <td class="chg ${cls}">${wrap(`<div>${chg}</div>`)}</td><td class="pct ${cls}">${wrap(`<div>${pct}</div>`)}</td></tr>`;
}).join('');

/* Candles: direction, body top, body bottom, wick top, wick bottom */
const candles = `B 322 355 307 355|B 311 322 305 348|R 311 322 307 351|B 316 321 304 333|R 316 380 313 393|R 379 399 376 402
B 424 439 402 468|R 424 489 411 503|R 490 494 442 496|R 494 517 493 557|B 455 517 412 529|B 378 455 370 457|B 336 381 322 384
B 303 336 299 345|B 289 305 268 319|B 289 290 264 295|B 285 289 257 322|R 285 318 276 319|B 299 315 294 318|B 297 300 280 316
R 297 302 283 303|R 301 311 296 320|B 290 313 288 333|B 268 291 265 301|B 255 272 247 287|B 249 256 222 275|B 206 250 195 259
R 206 213 204 237|B 184 213 170 223|R 184 203 167 204|B 187 205 184 208|R 186 211 173 212|B 192 210 173 216|R 192 205 192 237
R 205 226 199 249|R 226 233 224 279|R 221 235 216 237|B 209 235 206 239|R 209 220 189 231|R 220 232 217 249|B 150 232 150 234
B 133 150 128 159|R 133 144 127 150|R 144 150 142 187|B 121 150 114 153|R 121 148 114 151|R 148 161 133 172|B 129 160 127 163
B 131 140 130 141|R 132 134 128 165|R 135 168 133 176|R 168 194 152 208|B 147 194 145 203|B 127 148 118 148|R 128 136 120 145
R 136 155 134 164|B 139 155 127 170|R 140 203 136 221|B 153 203 136 214|G 153 154 148 162|B 143 152 138 162|R 143 153 137 169
R 153 179 138 197|R 179 194 171 194|K 194 195 184 203|B 188 194 186 201|R 166 216 166 223|R 216 287 216 289|R 287 314 265 314
B 291 314 287 324|R 291 314 258 318|K 314 315 290 325|B 270 303 264 312|B 215 271 177 282|B 212 215 202 242|B 211 213 199 231
R 210 245 209 279|B 234 246 227 248|R 238 243 232 256|B 223 242 216 276|R 223 235 205 255|B 228 235 223 267|K 228 229 199 242
B 226 229 210 232|B 207 232 197 232|B 205 208 202 218|B 181 206 169 208|R 181 193 163 207|B 148 193 142 212|B 117 149 105 149
R 138 161 105 183|B 143 161 106 175|R 143 151 112 154|B 137 150 114 154|G 137 138 114 153|R 137 143 127 148|B 133 167 120 168
R 132 172 127 178|B 163 172 144 184|R 163 179 148 186|R 179 200 163 205|R 200 205 194 209|K 196 197 188 216|R 197 207 185 216
B 163 208 152 209|B 152 164 143 177|R 152 277 149 280|B 267 277 255 279|B 242 263 227 272|K 242 243 230 260|R 243 252 236 255
R 251 259 238 265|B 244 261 186 305|R 244 250 221 251`.split(/[|\n]/);
const fills = { B: '#2f5bea', R: '#dc1f4a', G: '#999', K: '#222' };
const line = (x1, y1, x2, y2, c, w = 1, d = '') =>
  `<path d="M${x1} ${y1}L${x2} ${y2}" stroke="${c}" stroke-width="${w}" stroke-dasharray="${d}" fill="none"/>`;
const rect = (x, y, x2, y2, c) => `<rect x="${x}" y="${y}" width="${x2 - x}" height="${y2 - y}" fill="${c}"/>`;
const poly = (pts, c) => `<path d="M${pts}" stroke="${c}" fill="none" stroke-width="1.2"/>`;
const text = (x, y, s, size = 6, c = '#333', extra = '') =>
  `<text x="${x}" y="${y}" font-size="${size}" fill="${c}" text-anchor="middle" dominant-baseline="central" ${extra}>${s}</text>`;

let g = '<defs><clipPath id="plot"><path d="M94 50H1058V600H94z"/></clipPath></defs><g clip-path="url(#plot)">';
[[228, 253, 289, 326], [696, 154, 750, 283]].forEach(b => g += rect(...b, '#d3dcfa'));
[[720, 202, 727, 279], [768, 164, 773, 207], [814, 113, 821, 149], [861, 140, 868, 184], [912, 163, 915, 201]]
  .forEach((b, i) => g += rect(...b, i ? '#d9e0f8' : '#b9c6f3'));
g += line(228, 289.5, 289, 289.5, '#6f8bea') + line(696, 218.5, 750, 218.5, '#6f8bea') + line(720, 240.5, 727, 240.5, '#5f78dd');
[139, 259, 278.5, 419, 559.5, 653.5, 887.5, 934.5].forEach(x => g += line(x, 50, x, 600, '#9aa2dc', 1, '3 3'));
[185, 231.5, 325.5, 372.5, 466, 512.5, 606.5, 700.5, 747.5, 794.5, 841].forEach(x => g += line(x, 50, x, 600, '#b2bccc', 1, '3 3'));
[142, 321.5, 344.5, 610.5, 790, 805.5].forEach(x => g += line(x, 50, x, 600, '#cbccf8', 2.4) + line(x, 50, x, 600, '#b4b7f0', 1));
[227.5, 290, 696, 758.5].forEach(x => g += line(x, 50, x, 600, '#d9b2c0', 2));
[329, 375.5].forEach(x => g += line(x, 50, x, 600, '#f9eda2', 2));
[797.5, 844.5].forEach(x => g += line(x, 50, x, 600, '#fae3b8', 2));
g += line(94, 249.5, 1058, 249.5, '#efc5d3', 1, '2 1') + line(94, 251.5, 1058, 251.5, '#f3cfdc');
g += line(94, 308.5, 1058, 308.5, '#a8b2dc', 1, '3 3');
g += line(142, 349, 376, 343, '#b4b8bc', 1, '3 3') + line(290, 291, 376, 291.5, '#b4b8bc', 1, '3 3')
  + line(614, 207, 845, 213, '#b4b8bc', 1, '3 3') + line(750, 126, 845, 127, '#b4b8bc', 1, '3 3');
[[147, ': 0'], [235, '1.05%'], [297, '0.05'], [332, ': 0.08'], [705, '1.38'], [766, '0.62'], [801, '0.62'], [814, '0.62']]
  .forEach(([x, s]) => g += text(x, 596, s, 5, '#ccc'));
candles.forEach((row, i) => {
  const [d, t, b, wt, wb] = row.split(' ').map((v, k) => k ? +v : v);
  const x = Math.round((95 + i * 7.81) * 2) / 2;
  g += line(x, wt, x, wb, i % 3 ? '#777' : '#444');
  g += d === 'B' || d === 'R'
    ? `<rect x="${x - 2.5}" y="${t}" width="5" height="${Math.max(1, b - t)}" fill="${fills[d]}" stroke="${d === 'B' ? '#1c378f' : '#7c1230'}" stroke-width=".8"/>`
    : rect(x - 3, t, x + 3, t + 1, fills[d]);
});
[[142, 503.5, 182], [236, 318.5, 260], [290, 222, 306], [665, 177, 790]].forEach(([a, y, b]) => g += line(a, y, b, y, '#222', 1.2));
g += poly('165 557L305.500 154L368 288.500L432 128M431 122.500h5v5', '#eda142');
['142 400L165 557L173 412L180.500 463M176.500 458l4 5l4 -5', '251 283L267 333L275 270L282 287M277 285l5 3l3 -6',
  '290 250L298 197L305.500 235L321 168M315 171l6 -4l4 6', '649.500 324L790 105.500L798 183L860 127.500M853 127.500h7v6']
  .forEach(p => g += poly(p, '#4666de'));
g += '<circle cx="258" cy="313" r="2.5" fill="#fff" stroke="#555" stroke-width=".8"/>';
[[652, 117, 'monday'], [682.5, 108, 'tues'], [729.5, 100, 'wed'], [778.5, 93, 'thurs'], [826.5, 102, 'friday']]
  .forEach(([x, y, s]) => g += text(x, y, s, 9, '#222'));
const flag = (x, c = 'us') => g += `<circle cx="${x}" cy="594" r="5" fill="#fff" stroke="#d94a66"/><use href="#f-${c}" x="${x - 4}" y="590" width="8" height="8"/>`;
[172.5, 219.5, 266.5, 305.5, 352.5, 454, 540, 546.5, 743, 914.5, 961.5, 1008.5, 1055].forEach(x => flag(x));
[524, 665, 891].forEach(x => flag(x, 'au'));
g += '<circle cx="977.5" cy="594" r="4.500" fill="#fff" stroke="#83529b"/><path d="M979 591l-3 3.500h3l-2 3" fill="none" stroke="#83529b" stroke-width=".8"/>';
g += '<path fill="#111" d="M100 587h6v7h-3v-4h-3zM110 587h4l-3 7h-3z"/><circle cx="107.700" cy="588.500" r="1.500" fill="#111"/></g>';

/* Price scale */
[[75.5, 661], [95.5, 660], [115.5, 659], [135, 658], [155, 657], [175, 656], [195, 655], [215, 654], [235, 653], [275.5, 651],
  [295.5, 650], [315.5, 649], [336, 648], [356.5, 647], [377, 646], [397, 645], [417.5, 644], [437.5, 643], [458, 642], [474.5, 641.2],
  [491, 640.4], [507.5, 639.6], [523.5, 638.8], [538.5, 638.1], [552.5, 637.4], [567, 636.7], [581, 636], [596, 635.3]]
  .forEach(([y, v]) => g += text(1073.5, y, (v / 1000).toFixed(5), 6));
g += rect(1045, 245, 1089, 250, '#3748c8') + rect(1030, 246, 1057, 254, '#e0143c') + rect(1059, 246, 1089, 261, '#e0143c');
g += text(1043.5, 250.5, 'AUDUSD', 6, '#fff') + text(1073.5, 250.5, '0.65228', 6, '#fff') + text(1073.5, 257, '02:52:44', 6, '#f9b6c4');
g += rect(1048, 303, 1088, 313, '#111319') + line(1058.500, 303, 1058.500, 313, '#777') + text(1073.5, 308.5, '0.64940', 6, '#fff');
g += '<circle cx="1053" cy="308" r="3" fill="none" stroke="#fff" stroke-width=".8"/><path d="M1053 306.500v3M1051.500 308h3" stroke="#fff" stroke-width=".8"/>';

/* Time scale */
[[110, 20], [141.5, 22], [204, 24], [297.5, 26], [344.5, 27], [376, 29], [438, 'Jul'], [485.5, 2], [532, 3], [579, 4], [610, 6], [673, 8],
  [720, 9], [767, 10], [814, 11], [845, 13], [907.5, 15], [954, 16], [977.5, 17], [1048, 18]]
  .forEach(([x, s]) => g += text(x, 607, s, 7, '#333', s === 'Jul' ? 'font-weight="600"' : ''));
g += rect(223, 600, 295, 611, '#111319') + text(259, 606.5, "Wed 25 Jun '25 &#160; 05:00", 6, '#fff');
g += '<path d="M1073 604h4l2 3-2 3h-4l-2-3z" fill="none" stroke="#444" stroke-width=".8"/><circle cx="1075" cy="607" r="1.200" fill="none" stroke="#444" stroke-width=".7"/>';
$('chart').innerHTML = g;
```
